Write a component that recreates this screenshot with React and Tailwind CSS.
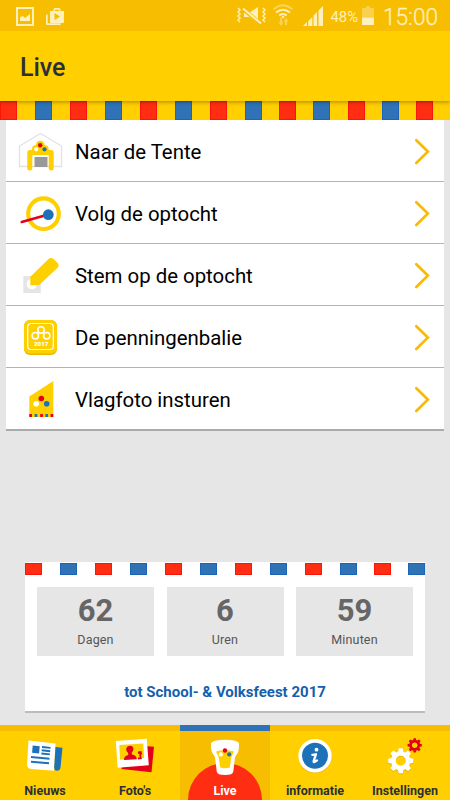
import React from "react";

function Stripes({ gaps, className }) {
  return (
    <div className={"flex shrink-0 " + className}>
      {gaps.map((gap, i) => (
        <div
          key={i}
          style={{ marginLeft: gap }}
          className={
            "h-full w-[17px] shrink-0 border " +
            (i % 2 === 0 ? "border-[#fb160a] bg-[#ff2d12]" : "border-[#1b64b6] bg-[#2f72b5]")
          }
        />
      ))}
    </div>
  );
}

function StatusBar() {
  return (
    <div className="relative z-10 h-[31px] shrink-0 bg-[#f7bd00]">
      <svg width="450" height="31" viewBox="0 0 450 31" fill="#fff0bd" fontFamily="Roboto, sans-serif">
        <path fillRule="evenodd" d="M16 7h18v19H16zM18 9v15h14V9z" />
        <path d="M20 21v-4l3-1 2 2 5-4v7z" />
        <path fillRule="evenodd" d="M50 11h3.500V9.500a1.500 1.500 0 0 1 1.500-1.500h4a1.500 1.500 0 0 1 1.500 1.500V11H64v11a1 1 0 0 1-1 1H51a1 1 0 0 1-1-1zM55 11h4V9.700h-4zM54.500 13v7l5.500-3.500z" />
        <path d="M46 14.500h1.700V23.300h13V25H47.500A1.500 1.500 0 0 1 46 23.500z" />
        <path d="M244 13h5l9-6v16l-9-6h-5z" />
        <path d="M243 9l18 15" stroke="#f7bd00" strokeWidth="4" />
        <path d="M243 8.500l18 15" stroke="#fff0bd" strokeWidth="2" />
        <path d="M238 8l2 2-2 2 2 2-2 2 2 2-2 2 2 2M263 8l2 2-2 2 2 2-2 2 2 2-2 2 2 2" fill="none" stroke="#fff0bd" strokeWidth="1.500" />
        <g fill="none" stroke="#fff0bd" strokeWidth="2">
          <path d="M273.500 9.300q9.500-8 19 0" opacity=".45" />
          <path d="M276 12.500q7-5.500 14 0M279.300 15.500q3.700-3 7.400 0" />
        </g>
        <circle cx="283" cy="17" r="1.300" />
        <path d="M280 18h2v4h1.500l-2.500 4-2.500-4h1.500zM285 25h2v-3.500h1.500L286 18l-2.500 3.500h1.500z" opacity=".45" />
        <path d="M303 26l4-4v4zM308.300 21l4-4v9h-4zM313.500 15.500l3.500-3.500v14h-3.500zM318.500 10.500L323 6v20h-4.500z" />
        <text x="330.500" y="22" fontSize="14.500" textLength="27.500" lengthAdjust="spacingAndGlyphs">48%</text>
        <path d="M366 6h4v2h4v9.500h-12V8h4z" opacity=".4" />
        <path d="M362 17.500h12V25h-12z" />
        <text x="383" y="25" fontSize="23.500" textLength="55" lengthAdjust="spacingAndGlyphs" fontWeight="300" stroke="#fff0bd" strokeWidth=".3">15:00</text>
      </svg>
    </div>
  );
}

function TentIcon() {
  return (
    <svg width="46" height="42" viewBox="17 131 46 42">
      <path d="M19.500 166.500v-20.500L40.500 133.500 61.500 146v20.500z" fill="#fff" stroke="#e2e2e2" strokeWidth="1.300" />
      <path d="M34.500 157h13v10h-13z" fill="#999" />
      <path d="M29.800 168v-15.500h21.400V168" fill="none" stroke="#ffd000" strokeWidth="5" strokeLinecap="round" strokeLinejoin="round" />
      <circle cx="36.200" cy="149.300" r="4.200" fill="#ffd000" />
      <circle cx="44.500" cy="149.300" r="4.200" fill="#ffd000" />
      <circle cx="40.200" cy="145.200" r="4.400" fill="#ffd000" />
      <circle cx="36.200" cy="149.300" r="2.100" fill="#fff" />
      <circle cx="44.500" cy="149.300" r="2.100" fill="#1d6fb8" />
      <circle cx="40.200" cy="145.300" r="2.200" fill="#e3001b" />
    </svg>
  );
}

function DialIcon() {
  return (
    <svg width="46" height="42" viewBox="17 193 46 42">
      <circle cx="43.500" cy="213.700" r="15.300" fill="none" stroke="#ffd000" strokeWidth="4.200" />
      <path d="M21.700 222l24-6.700" stroke="#e3001b" strokeWidth="2.500" strokeLinecap="round" />
      <circle cx="48.300" cy="214.700" r="5.400" fill="#1d71b8" />
    </svg>
  );
}

function PencilIcon() {
  return (
    <svg width="46" height="42" viewBox="17 255 46 42">
      <path d="M23.300 276h17.500v17H23.300z" fill="#e5e5e5" />
      <circle cx="31.800" cy="284" r="5.200" fill="#fff" />
      <path d="M30.300 285.200v-8.500l18.500-17.900q2.600-1.800 5 .5l3.800 3.800q2.200 2.500 0 4.700L40 284.200q-.8 1-2.500 1z" fill="#ffd000" />
    </svg>
  );
}

function TokenIcon() {
  return (
    <svg width="46" height="42" viewBox="17 317 46 42">
      <rect x="24" y="320" width="33" height="35" rx="6" fill="#e9b900" />
      <rect x="24" y="320" width="33" height="33.500" rx="6" fill="#ffd000" />
      <g fill="none" stroke="#fff">
        <rect x="27.700" y="323.500" width="25.600" height="26" rx="3.500" strokeWidth="1.200" />
        <circle cx="41" cy="330" r="3.200" strokeWidth="1.500" />
        <circle cx="35.300" cy="335.700" r="3.200" strokeWidth="1.500" />
        <circle cx="46.700" cy="335.700" r="3.200" strokeWidth="1.500" />
      </g>
      <text x="34" y="345.800" fontFamily="Roboto, sans-serif" fontWeight="900" fontSize="6" fill="#fff" textLength="14.300" lengthAdjust="spacingAndGlyphs">2017</text>
    </svg>
  );
}

function FlagIcon() {
  return (
    <svg width="46" height="42" viewBox="17 379 46 42">
      <path d="M29.300 396.500L53.300 381v36h-24z" fill="#ffd000" />
      <circle cx="41.300" cy="398.500" r="2.800" fill="#e3001b" />
      <circle cx="36.200" cy="403.700" r="2.800" fill="#fff" />
      <circle cx="46.700" cy="403.700" r="2.800" fill="#1d71b8" />
      <path d="M29.300 414h2.700v3h-2.700zM40.200 414h2.700v3h-2.700zM50.600 414h2.700v3h-2.700z" fill="#e3001b" />
      <path d="M34.600 414h2.700v3h-2.700zM45.400 414h2.700v3h-2.700z" fill="#1d71b8" />
    </svg>
  );
}

const rows = [
  ["Naar de Tente", TentIcon],
  ["Volg de optocht", DialIcon],
  ["Stem op de optocht", PencilIcon],
  ["De penningenbalie", TokenIcon],
  ["Vlagfoto insturen", FlagIcon],
];

function Menu() {
  return (
    <div className="mx-[6px] h-[311px] shrink-0 border-b-2 border-[#aaaaaa] bg-white">
      {rows.map(([label, Icon], i) => (
        <div
          key={label}
          className={
            "flex h-[62px] items-center pl-[11px] pr-[13px] pt-[2px] " +
            (i < rows.length - 1 ? "border-b border-[#b4b4b4]" : "")
          }
        >
          <Icon />
          <span className="ml-[12px] flex-1 whitespace-nowrap text-[20.4px] leading-[24px] text-black">{label}</span>
          <svg width="18" height="28" viewBox="413 138 18 28" fill="none" stroke="#fbba00" strokeWidth="2.700" strokeLinecap="round">
            <path d="M416.300 140.300l11.500 11.300-11.500 11.400" />
          </svg>
        </div>
      ))}
    </div>
  );
}

const counters = [
  ["62", "Dagen"],
  ["6", "Uren"],
  ["59", "Minuten"],
];

function Countdown() {
  return (
    <div className="mx-[25px] mt-[131px] flex h-[151px] shrink-0 flex-col border-b-2 border-[#bcbcbc] bg-white pt-px">
      <Stripes className="h-[12px]" gaps={[0, 18, 18, 18, 18, 18, 18, 18, 18, 18, 17, 17]} />
      <div className="mx-[12px] mt-[12px] flex justify-between">
        {counters.map(([n, unit]) => (
          <div key={unit} className="flex h-[69px] w-[117px] flex-col items-center bg-[#e6e6e6] pt-[6px]">
            <span className="text-[31px] font-bold leading-[36px] text-[#666]">{n}</span>
            <span className="mt-[3px] text-[12.5px] leading-[15px] tracking-[0.15px] text-[#555]">{unit}</span>
          </div>
        ))}
      </div>
      <p className="mt-[27px] text-center text-[15px] font-bold leading-[18px] text-[#175fac]">tot School- &amp; Volksfeest 2017</p>
    </div>
  );
}

function NewsIcon() {
  return (
    <>
      <path d="M28.500 740.500l27 3-1.500 27.200-23-1.700q-4-.5-4-5z" fill="#fff" />
      <path d="M55.500 747l7 .8-2 19.700q-.7 3.500-4 3.200-2.500-.5-2.300-3.500z" fill="#1d71b8" />
      <path d="M32.700 745.500l7 .8-.6 7.200-7-.7z" fill="#1d71b8" />
      <path d="M42 747l8.500.9M41.700 750.300l8.500.9M41.400 753.500l8.500.9M31 757l18.500 1.700M31 761.700l18 1.600" stroke="#1d71b8" strokeWidth="1.900" />
    </>
  );
}

function PhotoIcon() {
  return (
    <>
      <path d="M126 744.500l28 2.200-2.500 25.500-30-3.300z" fill="#e3001b" />
      <path d="M115.800 741l31-2.200 2 26.500-31.200 2.500z" fill="#fff" />
      <path d="M119.300 745l24-1.500.8 14.500-24 1.800z" fill="#ffd000" />
      <path d="M124 760q-.3-4 4.300-5l-.2-2q-2.300-2-1.900-4.500.7-2.500 3.700-2.700 3.200 0 3.500 3 0 2.700-1.700 4l.2 1.800q4.500.7 5 4.700z" fill="#e3001b" />
      <path d="M138 751.500l3.500-.5.5 3-1 1.500 1 3.500-4 .4v-1.900h2l-1-2.200 1-1.300-2-.2z" fill="#e3001b" />
    </>
  );
}

function BeerIcon() {
  return (
    <>
      <path d="M211 743q3-3.300 14-3.300t14 3.300v4.500q-.2 5-2.700 7.500-1.300 1.500-1.500 4l-1.500 12.500q-.3 3.500-8.300 3.500t-8.300-3.500L215.200 759q-.2-2.500-1.500-4-2.500-2.500-2.700-7.500z" fill="#fff" />
      <path d="M216 751.500q9-2.500 18 0-.7 2-2 4-.8 1.500-1 3.500l-1.200 8.500q-4.800 1.500-9.600 0L219 759q-.2-2-1-3.500-1.300-2-2-4z" fill="#ffd000" />
      <circle cx="225" cy="750.500" r="2.200" fill="#e3001b" />
      <circle cx="220.800" cy="754.400" r="2.100" fill="#fff" />
      <circle cx="229.200" cy="754.400" r="2.100" fill="#1d71b8" />
    </>
  );
}

function InfoIcon() {
  return (
    <>
      <circle cx="315" cy="756.800" r="16.500" fill="#f0b400" />
      <circle cx="315" cy="755.800" r="16.700" fill="#fff" />
      <circle cx="315" cy="755.800" r="13" fill="#1d71b8" />
      <circle cx="316.500" cy="749.700" r="1.900" fill="#fff" />
      <path d="M312.300 754.800q2.500 0 3.700-.6l-2.300 7q-.4 2.300 3.300-.8" fill="none" stroke="#fff" strokeWidth="2.300" strokeLinecap="round" strokeLinejoin="round" />
    </>
  );
}

function Gear({ cx, cy, scale, fill }) {
  return (
    <g transform={`translate(${cx} ${cy}) scale(${scale})`} fill={fill}>
      {[0, 45, 90, 135, 180, 225, 270, 315].map((a) => (
        <path key={a} d="M-2.700-8.500l.5-3.400q.1-.6.700-.6h3q.6 0 .7.600l.5 3.400z" transform={`rotate(${a})`} />
      ))}
      <circle r="7.300" fill="none" stroke={fill} strokeWidth="4.700" />
    </g>
  );
}

function SettingsIcon() {
  return (
    <>
      <Gear cx="400.700" cy="761.800" scale="1" fill="#edb600" />
      <Gear cx="400.700" cy="760.800" scale="1" fill="#fff" />
      <Gear cx="414.700" cy="745.300" scale=".57" fill="#e3001b" />
    </>
  );
}

const tabs = [
  ["Nieuws", NewsIcon, "0 731 90 46"],
  ["Foto's", PhotoIcon, "90 731 90 46"],
  ["Live", BeerIcon, "180 731 90 46"],
  ["informatie", InfoIcon, "270 731 90 46"],
  ["Instellingen", SettingsIcon, "360 731 90 46"],
];

function TabBar() {
  return (
    <nav className="mt-auto grid h-[75px] shrink-0 grid-cols-5 bg-[#ffcf00]">
      {tabs.map(([label, Icon, box]) => {
        const active = label === "Live";
        return (
          <div
            key={label}
            className={
              "relative flex h-[75px] flex-col items-center overflow-hidden border-t-[6px] " +
              (active ? "border-[#2f72b5] bg-[#f7bd00]" : "border-[#f7bd00]")
            }
          >
            {active && <div className="absolute left-[8px] top-[32px] size-[74px] rounded-full bg-[#ff2d12]" />}
            <svg className="relative shrink-0" width="90" height="46" viewBox={box}>
              <Icon />
            </svg>
            <span
              className={
                "relative mt-[5px] whitespace-nowrap text-[12.5px] font-bold leading-[18px] " +
                (active ? "text-white" : "text-[#2b3038]")
              }
            >
              {label}
            </span>
          </div>
        );
      })}
    </nav>
  );
}

export default function App() {
  return (
    <div className="flex h-[800px] w-[450px] flex-col overflow-hidden bg-[#e6e6e6] font-['Roboto',sans-serif]">
      <StatusBar />
      <header className="relative flex h-[70px] shrink-0 items-center bg-[#ffcf00] pl-[20px] pt-[3px] shadow-[0_1px_4px_rgba(0,0,0,0.35)]">
        <h1 className="text-[25px] font-medium leading-[30px] text-[#2b3038]">Live</h1>
      </header>
      <Stripes
        className="h-[19px] overflow-hidden bg-[#ffcf00]"
        gaps={[0, 18, 18, 18, 18, 18, 18, 18, 17, 17, 18, 17, 17]}
      />
      <Menu />
      <Countdown />
      <TabBar />
    </div>
  );
}
